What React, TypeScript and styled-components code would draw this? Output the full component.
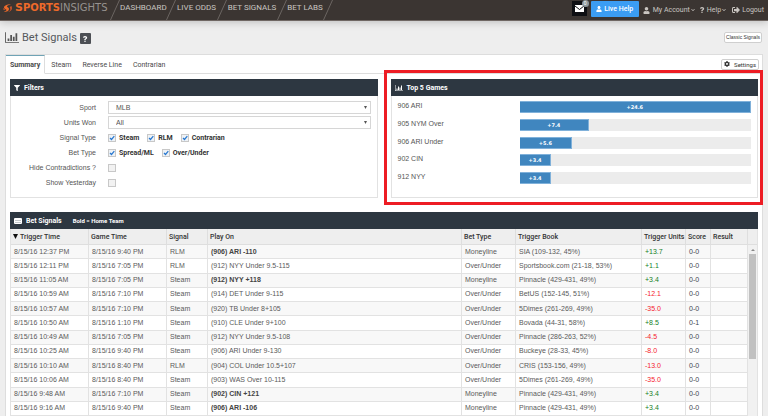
import React from 'react';
import styled, { createGlobalStyle } from 'styled-components';
import { FaUser, FaQuestion, FaSignOutAlt, FaCog, FaFilter, FaChevronDown } from 'react-icons/fa';

const GlobalStyle = createGlobalStyle`
  *, *::before, *::after { box-sizing: border-box; }
  body {
    margin: 0;
    overflow: hidden;
    background: #eeeeee;
    color: #555555;
    font-family: 'Liberation Sans', Arial, sans-serif;
    font-size: 7px;
    line-height: 10px;
  }
  button, select, input { font: inherit; color: inherit; margin: 0; }
  a { color: inherit; text-decoration: none; }
  h1, h2 { margin: 0; font-weight: 400; }
  svg { display: block; flex: none; }
`;

const Page = styled.div`
  display: flex;
  flex-direction: column;
  height: 100vh;
`;

const TopBar = styled.header`
  display: flex;
  align-items: center;
  height: 21px;
  flex: none;
  padding: 0 4px 0 3px;
  background: #3b3532;
  border-bottom: 1px solid #6f6763;
  box-shadow: 0 1px 8px rgba(0, 0, 0, 0.22);
  color: #c9c5c1;
  font-family: Roboto, sans-serif;
`;

const Logo = styled.a`
  display: flex;
  align-items: center;
  width: 107px;
  margin-top: -4px;
  gap: 3px;
  font-family: 'DejaVu Sans', sans-serif;
  font-size: 10px;
  white-space: nowrap;
`;

const LogoStrong = styled.span`
  display: inline-block;
  color: #ee6a2a;
  font-weight: 700;
  &::first-letter { font-size: 11px; }
`;

const LogoLight = styled.span`
  color: #96928f;
`;

const Nav = styled.nav`
  display: flex;
  align-items: center;
  height: 20px;
`;

const NavLink = styled.a<{ $width: number }>`
  width: ${(p) => p.$width}px;
  margin-top: -4px;
  font-size: 8px;
  text-align: center;
  white-space: nowrap;
`;

const Account = styled.div`
  display: flex;
  align-items: center;
  margin-left: auto;
  height: 20px;
`;

const MailButton = styled.button`
  position: relative;
  display: grid;
  place-items: center;
  width: 15px;
  height: 15px;
  margin: 0 4px 3px 0;
  padding: 0;
  border: 0;
  background: #0e0f13;
`;

const MailBadge = styled.span`
  position: absolute;
  top: -1px;
  right: -2px;
  width: 7px;
  height: 7px;
  border-radius: 50%;
  background: #8d979c;
  color: #fff;
  font-size: 5px;
  line-height: 7px;
  text-align: center;
`;

const LiveHelp = styled.button`
  display: flex;
  align-items: center;
  justify-content: center;
  gap: 2px;
  width: 48px;
  height: 16px;
  margin: 0 4px 2px 0;
  padding: 0;
  border: 0;
  border-radius: 1px;
  background: #3b9df3;
  color: #fff;
  font-weight: 500;
`;

const AccountLink = styled.a<{ $gap?: number; $after?: number }>`
  display: flex;
  align-items: center;
  gap: ${(p) => p.$gap ?? 3}px;
  margin-right: ${(p) => p.$after ?? 0}px;
  white-space: nowrap;
`;

const LinkText = styled.span`
  display: flex;
  align-items: center;
  gap: 1px;
`;

const TitleRow = styled.div`
  display: flex;
  align-items: center;
  flex: none;
  height: 33px;
  padding: 0 6px 0 5px;
`;

const Title = styled.h1`
  margin: 0 3px;
  font-family: Roboto, sans-serif;
  font-size: 11px;
  line-height: 14px;
  color: #55585c;
`;

const HelpButton = styled.button`
  display: grid;
  place-items: center;
  width: 11px;
  height: 11px;
  margin-top: 2px;
  padding: 0;
  border: 0;
  border-radius: 1px;
  background: #4c4f54;
  color: #fff;
`;

const SmallButton = styled.button<{ $tight?: boolean }>`
  display: flex;
  align-items: center;
  gap: 4px;
  height: 11px;
  margin-left: auto;
  padding: 0 ${(p) => (p.$tight ? 1 : 2)}px;
  border: 1px solid #cfcfcf;
  border-radius: 2px;
  background: #fff;
  color: #333;
  font-size: ${(p) => (p.$tight ? 5 : 6)}px;
  line-height: 9px;
  white-space: nowrap;
`;

const Content = styled.main`
  display: flex;
  flex-direction: column;
  flex: 1;
  min-height: 0;
  margin: 0 5px;
  background: #fff;
  border: solid #dddddd;
  border-width: 1px 1px 0;
`;

const TabBar = styled.div`
  display: flex;
  flex: none;
  height: 19px;
  font-family: Roboto, sans-serif;
`;

const Tab = styled.button<{ $active?: boolean }>`
  padding: 0 ${(p) => (p.$active ? '4px' : '5px 0 6px')};
  border: 0 solid #dddddd;
  border-right-width: ${(p) => (p.$active ? 1 : 0)}px;
  border-top: 1px solid ${(p) => (p.$active ? '#6fa3b5' : 'transparent')};
  border-bottom: 1px solid ${(p) => (p.$active ? 'transparent' : '#dddddd')};
  background: none;
  color: #4a4a4a;
  font-weight: ${(p) => (p.$active ? 700 : 400)};
`;

const TabRest = styled.div`
  display: flex;
  align-items: center;
  flex: 1;
  padding-right: 3px;
  border-bottom: 1px solid #dddddd;
`;

const Columns = styled.div`
  display: grid;
  grid-template-columns: 1fr 1fr;
  gap: 13px;
  flex: none;
  padding: 5px 4px 14px;
`;

const Panel = styled.section`
  position: relative;
  display: flex;
  flex-direction: column;
  border: solid #e2e2e2;
  border-width: 0 1px 1px;
`;

const Highlighted = styled(Panel)`
  &::after {
    content: '';
    position: absolute;
    inset: -9px -6px -8px -8px;
    border: 3px solid #ed1c24;
    pointer-events: none;
  }
`;

const PanelHeader = styled.div`
  display: flex;
  align-items: center;
  flex: none;
  gap: 4px;
  height: 17px;
  margin: 0 -1px;
  padding: 0 4px;
  background: #2d3741;
  color: #fff;
  font-family: Roboto, sans-serif;
`;

const PanelTitle = styled.h2`
  font-size: 7px;
  font-weight: 700;
`;

const Legend = styled.span`
  margin-left: 7px;
  font-size: 6px;
  font-weight: 700;
`;

const FilterForm = styled.form`
  display: grid;
  grid-template-columns: 85px 1fr;
  grid-auto-rows: 15px;
  column-gap: 12px;
  padding: 4px 6px 7px 0;
`;

const FieldName = styled.label`
  align-self: center;
  text-align: right;
`;

const Select = styled.select`
  align-self: center;
  width: 100%;
  height: 13px;
  padding: 0 7px;
  border: 1px solid #d6d6d6;
  border-radius: 0;
  appearance: none;
  background: #fff url("data:image/svg+xml,%3Csvg xmlns='http://www.w3.org/2000/svg' width='3' height='3'%3E%3Cpath d='M0 0h3L1.500 3z' fill='%23555'/%3E%3C/svg%3E") no-repeat right 3px center;
`;

const Checks = styled.div`
  display: flex;
  align-items: center;
  gap: 8px;
`;

const CheckLabel = styled.label`
  display: flex;
  align-items: center;
  gap: 3px;
  color: #333;
  font-family: Roboto, sans-serif;
  font-weight: 700;
`;

const Checkbox = styled.input`
  appearance: none;
  width: 8px;
  height: 8px;
  border: 1px solid #c8c8c8;
  background: #f2f2f2;
  &:checked {
    background: #eef2f6 url("data:image/svg+xml,%3Csvg xmlns='http://www.w3.org/2000/svg' viewBox='0 0 6 6'%3E%3Cpath d='M1 3l1.500 1.500L5.300 1.200' fill='none' stroke='%232878d0' stroke-width='1.200'/%3E%3C/svg%3E") center / 6px no-repeat;
  }
`;

const Games = styled.div`
  display: flex;
  flex-direction: column;
  justify-content: space-between;
  flex: 1;
  padding: 5px 6px 13px;
`;

const Game = styled.div`
  display: grid;
  grid-template-columns: 122px 1fr;
  align-items: center;
  height: 12px;
`;

const GameName = styled.span`
  padding-bottom: 2px;
`;

const Track = styled.div`
  height: 12px;
  background: #ececec;
`;

const Bar = styled.div`
  height: 12px;
  background: #4086bf;
  border: 1px solid #80b1da;
  border-left: 0;
  color: #fff;
  font-family: 'DejaVu Sans', sans-serif;
  font-size: 5px;
  font-weight: 700;
  line-height: 10px;
  text-align: center;
`;

const SignalsPanel = styled(Panel)`
  flex: 1;
  min-height: 0;
  margin: 0 4px;
  border-bottom: 0;
`;

const TableArea = styled.div`
  display: flex;
  flex: 1;
  min-height: 0;
`;

const Table = styled.table`
  flex: 1;
  width: 0;
  height: 100%;
  table-layout: fixed;
  border-collapse: separate;
  border-spacing: 0;
`;

const Head = styled.th<{ $width?: number }>`
  width: ${(p) => (p.$width ? `${p.$width}px` : 'auto')};
  height: 16px;
  padding: 0 2px;
  border: solid #dedede;
  border-width: 0 1px 1px 0;
  background: #eeeeee;
  color: #333;
  font-family: Roboto, sans-serif;
  font-weight: 500;
  text-align: left;
  white-space: nowrap;
`;

const SortHead = styled.span`
  display: flex;
  align-items: center;
  gap: 2px;
`;

const Row = styled.tr`
  &:nth-child(odd) { background: #f8f8f8; }
`;

type Tone = 'plain' | 'bold' | 'up' | 'down' | 'dark';
const tones: Record<Tone, string> = {
  plain: '#5a5a5a',
  bold: '#444444',
  up: '#15801f',
  down: '#f5222d',
  dark: '#3e4650',
};

const Cell = styled.td<{ $tone?: Tone }>`
  padding: 0 3px;
  border: solid #e2e2e2;
  border-width: 0 1px 1px 0;
  color: ${(p) => tones[p.$tone ?? 'plain']};
  font-weight: ${(p) => (p.$tone === 'bold' ? 700 : 400)};
  line-height: 10px;
  white-space: nowrap;
`;

const Scrollbar = styled.div`
  display: flex;
  flex-direction: column;
  align-items: center;
  width: 9px;
  background: #f1f1f1;
`;

const ScrollCap = styled.div`
  align-self: stretch;
  height: 16px;
  background: #eeeeee;
  border-bottom: 1px solid #dedede;
`;

const ScrollArrow = styled.svg`
  margin: 4px 0 3px;
`;

const ScrollThumb = styled.div`
  width: 7px;
  height: 56%;
  background: #c1c1c1;
`;

const ChartIcon = ({ width, height }: { width: number; height: number }) => (
  <svg width={width} height={height} viewBox="0 0 16 12" fill="currentColor" aria-hidden="true">
    <path d="M0 0h1v11h15v1H0z" />
    <path d="M3 7h2v3H3zM6 3h2v7H6zM9 5h2v5H9zM12 1h2v9h-2z" />
  </svg>
);

const ListIcon = () => (
  <svg width="8" height="6" viewBox="0 0 8 6" aria-hidden="true">
    <rect width="8" height="6" rx="1" fill="#fff" />
    <path d="M1 2.500h6M1 4.500h6" stroke="#9aa2aa" strokeWidth="0.600" />
  </svg>
);

const Slash = () => (
  <svg width="10" height="20" viewBox="0 0 10 20" aria-hidden="true">
    <path d="M9.500 0L0.500 20" stroke="#6b6562" strokeWidth="1" />
  </svg>
);

const LogoMark = () => (
  <svg width="9" height="9" viewBox="0 0 18 18" aria-hidden="true">
    <path d="M16 0C8 1 2 3 2 7c0 3 5 3 5 5 0 1-3 3-6 4 7 0 11-2 11-6 0-3-4-3-4-5 0-2 4-3 8-5z" fill="#ee6a2a" />
    <path d="M17 4c-3 1-4 2-3 4 2 3 0 6-4 8 5-1 8-4 8-8zM0 8c0 3 1 4 4 4 1 0 1-1 0-1C2 10 1 9 0 8z" fill="#c9542a" />
  </svg>
);

const navItems: [string, number][] = [
  ['DASHBOARD', 46],
  ['LIVE ODDS', 41],
  ['BET SIGNALS', 50],
  ['BET LABS', 36],
];

const games: [string, number][] = [
  ['906 ARI', 24.6],
  ['905 NYM Over', 7.4],
  ['906 ARI Under', 5.6],
  ['902 CIN', 3.4],
  ['912 NYY', 3.4],
];

const columns: [string, number?][] = [
  ['Trigger Time', 78],
  ['Game Time', 78],
  ['Signal', 41],
  ['Play On'],
  ['Bet Type', 54],
  ['Trigger Book', 126],
  ['Trigger Units', 44],
  ['Score', 25],
  ['Result', 37],
];

const signals = [
  ['12:37 PM', '9:40 PM', 'RLM', '(906) ARI -110', 'Moneyline', 'SIA (109-132, 45%)', '+13.7', '0-0'],
  ['12:11 PM', '7:05 PM', 'RLM', '(912) NYY Under 9.5-115', 'Over/Under', 'Sportsbook.com (21-18, 53%)', '+1.1', '0-0'],
  ['11:05 AM', '7:05 PM', 'Steam', '(912) NYY +118', 'Moneyline', 'Pinnacle (429-431, 49%)', '+3.4', '0-0'],
  ['10:59 AM', '7:10 PM', 'Steam', '(914) DET Under 9-115', 'Over/Under', 'BetUS (152-145, 51%)', '-12.1', '0-0'],
  ['10:57 AM', '7:10 PM', 'Steam', '(920) TB Under 8+105', 'Over/Under', '5Dimes (261-269, 49%)', '-35.0', '0-0'],
  ['10:50 AM', '1:10 PM', 'Steam', '(910) CLE Under 9+100', 'Over/Under', 'Bovada (44-31, 58%)', '+8.5', '0-1'],
  ['10:49 AM', '7:05 PM', 'Steam', '(912) NYY Under 9.5-108', 'Over/Under', 'Pinnacle (286-263, 52%)', '-4.5', '0-0'],
  ['10:25 AM', '9:40 PM', 'Steam', '(906) ARI Under 9-130', 'Over/Under', 'Buckeye (28-33, 45%)', '-8.0', '0-0'],
  ['10:10 AM', '8:40 PM', 'RLM', '(904) COL Under 10.5+107', 'Over/Under', 'CRIS (153-156, 49%)', '-13.0', '0-0'],
  ['10:06 AM', '8:40 PM', 'Steam', '(903) WAS Over 10-115', 'Over/Under', '5Dimes (261-269, 49%)', '-35.0', '0-0'],
  ['9:48 AM', '7:10 PM', 'Steam', '(902) CIN +121', 'Moneyline', 'Pinnacle (429-431, 49%)', '+3.4', '0-0'],
  ['9:16 AM', '9:40 PM', 'Steam', '(906) ARI -106', 'Moneyline', 'Pinnacle (429-431, 49%)', '+3.4', '0-0'],
];

const Check = ({ name }: { name: string }) => (
  <CheckLabel>
    <Checkbox type="checkbox" defaultChecked />
    {name}
  </CheckLabel>
);

export default function App() {
  return (
    <Page>
      <GlobalStyle />
      <TopBar>
        <Logo href="#" aria-label="SportsInsights">
          <LogoMark />
          <span>
            <LogoStrong>SPORTS</LogoStrong>
            <LogoLight>INSIGHTS</LogoLight>
          </span>
        </Logo>
        <Nav>
          <Slash />
          {navItems.map(([name, width]) => (
            <React.Fragment key={name}>
              <NavLink href="#" $width={width}>{name}</NavLink>
              <Slash />
            </React.Fragment>
          ))}
        </Nav>
        <Account>
          <MailButton aria-label="Messages">
            <svg width="9" height="7" viewBox="0 0 9 7" aria-hidden="true">
              <rect width="9" height="7" fill="#fff" />
              <path d="M0 1l4.500 3.500L9 1" fill="none" stroke="#0e0f13" />
            </svg>
            <MailBadge>0</MailBadge>
          </MailButton>
          <LiveHelp><FaUser size={6} />Live Help</LiveHelp>
          <AccountLink href="#" $after={4}>
            <FaUser size={7} />
            <LinkText>My Account<FaChevronDown size={4} /></LinkText>
          </AccountLink>
          <AccountLink href="#" $gap={2} $after={6}>
            <FaQuestion size={6} />
            <LinkText>Help<FaChevronDown size={4} /></LinkText>
          </AccountLink>
          <AccountLink href="#" $gap={2}>
            <FaSignOutAlt size={8} />
            Logout
          </AccountLink>
        </Account>
      </TopBar>
      <TitleRow>
        <ChartIcon width={14} height={11} />
        <Title>Bet Signals</Title>
        <HelpButton aria-label="Help"><FaQuestion size={6} /></HelpButton>
        <SmallButton $tight>Classic Signals</SmallButton>
      </TitleRow>
      <Content>
        <TabBar>
          <Tab $active>Summary</Tab>
          <Tab>Steam</Tab>
          <Tab>Reverse Line</Tab>
          <Tab>Contrarian</Tab>
          <TabRest>
            <SmallButton><FaCog size={6} />Settings</SmallButton>
          </TabRest>
        </TabBar>
        <Columns>
          <Panel>
            <PanelHeader>
              <FaFilter size={6} />
              <PanelTitle>Filters</PanelTitle>
            </PanelHeader>
            <FilterForm>
              <FieldName htmlFor="sport">Sport</FieldName>
              <Select id="sport"><option>MLB</option></Select>
              <FieldName htmlFor="units">Units Won</FieldName>
              <Select id="units"><option>All</option></Select>
              <FieldName as="span">Signal Type</FieldName>
              <Checks><Check name="Steam" /><Check name="RLM" /><Check name="Contrarian" /></Checks>
              <FieldName as="span">Bet Type</FieldName>
              <Checks><Check name="Spread/ML" /><Check name="Over/Under" /></Checks>
              <FieldName htmlFor="hide">Hide Contradictions ?</FieldName>
              <Checks><Checkbox id="hide" type="checkbox" /></Checks>
              <FieldName htmlFor="yesterday">Show Yesterday</FieldName>
              <Checks><Checkbox id="yesterday" type="checkbox" /></Checks>
            </FilterForm>
          </Panel>
          <Highlighted>
            <PanelHeader>
              <ChartIcon width={8} height={6} />
              <PanelTitle>Top 5 Games</PanelTitle>
            </PanelHeader>
            <Games>
              {games.map(([name, units]) => (
                <Game key={name}>
                  <GameName>{name}</GameName>
                  <Track>
                    <Bar style={{ width: `${(units / 24.6) * 100}%` }}>+{units}</Bar>
                  </Track>
                </Game>
              ))}
            </Games>
          </Highlighted>
        </Columns>
        <SignalsPanel>
          <PanelHeader>
            <ListIcon />
            <PanelTitle>Bet Signals</PanelTitle>
            <Legend>Bold = Home Team</Legend>
          </PanelHeader>
          <TableArea>
            <Table>
              <thead>
                <tr>
                  {columns.map(([name, width], i) => (
                    <Head key={name} $width={width}>
                      {i === 0 ? (
                        <SortHead>
                          <svg width="5" height="5" viewBox="0 0 5 5" aria-hidden="true">
                            <path d="M0 0h5L2.500 5z" fill="#111" />
                          </svg>
                          {name}
                        </SortHead>
                      ) : name}
                    </Head>
                  ))}
                </tr>
              </thead>
              <tbody>
                {signals.map(([trigger, game, signal, play, type, book, units, score]) => (
                  <Row key={trigger}>
                    <Cell>8/15/16 {trigger}</Cell>
                    <Cell>8/15/16 {game}</Cell>
                    <Cell>{signal}</Cell>
                    <Cell $tone={type === 'Moneyline' ? 'bold' : 'plain'}>{play}</Cell>
                    <Cell>{type}</Cell>
                    <Cell>{book}</Cell>
                    <Cell $tone={units.startsWith('+') ? 'up' : 'down'}>{units}</Cell>
                    <Cell $tone="dark">{score}</Cell>
                    <Cell />
                  </Row>
                ))}
              </tbody>
            </Table>
            <Scrollbar>
              <ScrollCap />
              <ScrollArrow width="4" height="2" viewBox="0 0 4 2" aria-hidden="true">
                <path d="M2 0l2 2H0z" fill="#888" />
              </ScrollArrow>
              <ScrollThumb />
            </Scrollbar>
          </TableArea>
        </SignalsPanel>
      </Content>
    </Page>
  );
}
